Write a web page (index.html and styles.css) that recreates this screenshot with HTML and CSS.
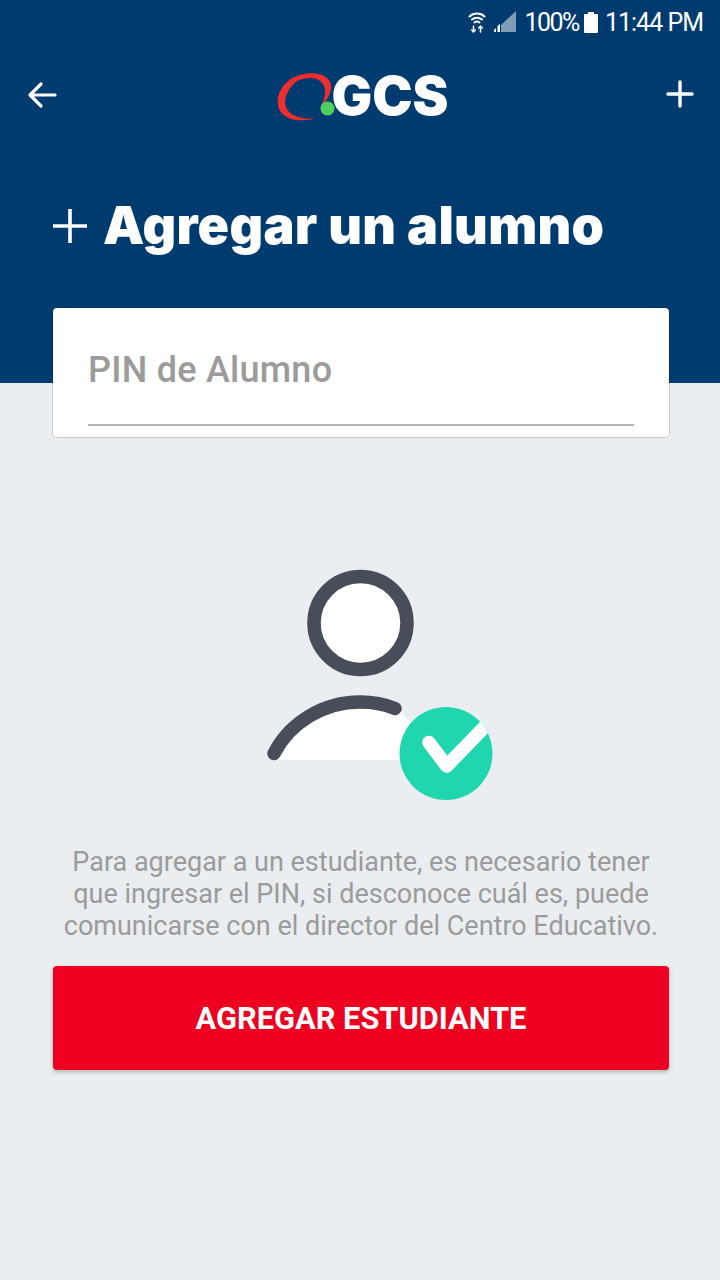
FILE: index.html
```html
<!DOCTYPE html>
<html lang="es">
<head>
<meta charset="utf-8">
<title>Agregar un alumno</title>
<link rel="stylesheet" href="styles.css">
</head>
<body>
<div class="app">
  <header class="hero">
    <div class="status">
      <svg class="ic-wifi" width="18" height="22" viewBox="0 0 18 22" fill="none" stroke="#fff" stroke-linecap="round">
        <path d="M1.500 5.500C5.500 1.500 12.500 1.500 16.500 5.500" stroke-width="2"/>
        <path d="M4 8.500C6.800 6 11.200 6 14 8.500" stroke-width="2"/>
        <path d="M6.500 11.500C8 10.300 10 10.300 11.500 11.500" stroke-width="2"/>
        <path d="M5.500 15v6M3.700 19l1.800 2 1.800-2M12.500 21v-6M10.700 17l1.800-2 1.800 2" stroke-width="1.500"/>
      </svg>
      <svg class="ic-signal" width="22" height="22" viewBox="0 0 22 22">
        <path d="M7 21V14L22 0v21z" fill="#fff" opacity=".5"/>
        <path d="M0 21v-2l2-2v4zM3.500 21v-6l2.500-2v8z" fill="#fff"/>
      </svg>
      <span class="st-pct">100%</span>
      <svg class="ic-batt" width="14" height="21" viewBox="0 0 14 21"><path d="M4 0h6v2h3a1 1 0 0 1 1 1v17a1 1 0 0 1-1 1H1a1 1 0 0 1-1-1V3a1 1 0 0 1 1-1h3z" fill="#fff"/></svg>
      <span class="st-time">11:44 PM</span>
    </div>
    <nav class="nav">
      <svg class="ic-nav ic-back" width="32" height="32" viewBox="0 0 32 32" fill="none" stroke="#fff" stroke-width="3.200" stroke-linecap="round" stroke-linejoin="round"><path d="M29 16H4M15 5 4 16l11 11"/></svg>
      <div class="logo">
        <svg class="logo-mark" width="64" height="54" viewBox="-1 -2 64 54">
          <path d="M40 47C28 51 9 51 3 38-2 25 8 8 24 4 36 0 53 2 55 14 56 22 50 31 44 37 49 28 51 20 47 13 43 6 31 5 21 10 12 17 7 28 10 36 14 46 28 49 40 47z" fill="#ee2e2e"/>
          <circle cx="51.500" cy="37.500" r="7" fill="#4fcf5f"/>
        </svg>
        <span class="logo-text">GCS</span>
      </div>
      <svg class="ic-nav" width="28" height="28" viewBox="0 0 28 28" fill="none" stroke="#fff" stroke-width="3.400" stroke-linecap="round"><path d="M14 2v24M2 14h24"/></svg>
    </nav>
    <h1 class="title">
      <svg class="title-plus" width="36" height="36" viewBox="0 0 36 36" fill="none" stroke="#fff" stroke-width="3.600"><path d="M18 1v34M1 18h34"/></svg>
      <span>Agregar un alumno</span>
    </h1>
  </header>
  <main class="content">
    <section class="card">
      <div class="field">PIN de Alumno</div>
    </section>
    <svg class="illus" width="240" height="250" viewBox="241 560 240 250" overflow="visible">
      <defs><clipPath id="badge"><circle cx="446" cy="753.500" r="46.500"/></clipPath></defs>
      <circle cx="360.500" cy="623" r="46.500" fill="#fff" stroke="#474d59" stroke-width="13.500"/>
      <path d="M274 760C284 726 322 702 360 702 372 702 385 705 400 710L440 760z" fill="#fff"/>
      <path d="M274 753.500C290 722 324 702 360 702 372 702 384 704 395 708.500" fill="none" stroke="#474d59" stroke-width="13.500" stroke-linecap="round"/>
      <circle cx="446" cy="753.500" r="46.500" fill="#20d6ae"/>
      <path d="M429 742.500 446.700 766 500 711" fill="none" stroke="#fff" stroke-width="13.500" stroke-linecap="round" stroke-linejoin="round" clip-path="url(#badge)"/>
    </svg>
    <p class="hint">Para agregar a un estudiante, es necesario tener que ingresar el PIN, si desconoce cuál es, puede comunicarse con el director del Centro Educativo.</p>
    <button class="cta" type="button">AGREGAR ESTUDIANTE</button>
  </main>
</div>
</body>
</html>
```
FILE: styles.css
```css
* { box-sizing: border-box; }
html, body { margin: 0; padding: 0; }
body { font-family: Roboto, "Liberation Sans", sans-serif; background: #eaeef1; }
.app { width: 720px; height: 1280px; overflow: hidden; display: flex; flex-direction: column; }
.hero { background: #003b6f; height: 383px; color: #fff; flex: none; }
.status { height: 44px; padding: 0 17px 0 0; display: flex; justify-content: flex-end; align-items: center; font-size: 25px; letter-spacing: -1px; color: #fff; }
.ic-wifi { margin-right: 8px; }
.ic-signal { margin-right: 8px; }
.st-pct { margin-right: 5px; letter-spacing: -1.500px; }
.ic-batt { margin-right: 7px; }
.nav { display: flex; justify-content: space-between; align-items: center; height: 100px; padding: 0 26px; }
.ic-back { margin-top: 2px; }
.logo { display: flex; align-items: center; margin-top: 4px; }
.logo-mark { margin-right: -8px; margin-top: 0; }
.logo-text { font-family: Inter, sans-serif; font-weight: 900; font-size: 54px; line-height: 54px; letter-spacing: 0; }
.title { margin: 47px 0 0 52px; display: flex; align-items: center; gap: 15px; font-family: Inter, sans-serif; font-weight: 900; font-size: 52px; line-height: 70px; letter-spacing: .3px; }
.content { flex: 1; display: flex; flex-direction: column; align-items: center; padding: 0 51px 0 53px; }
.card { width: 616px; height: 129px; margin-top: -75px; padding: 37px 35px 0; background: #fff; border-radius: 4px; box-shadow: 0 0 0 1px rgba(0,0,0,.14); flex: none; }
.field { height: 81px; border-bottom: 2px solid #b3b3b3; color: #9b9b9b; font-size: 36px; font-weight: 500; line-height: 50px; letter-spacing: .25px; }
.illus { margin-top: 123px; flex: none; }
.hint { width: 616px; margin: 36px 0 0; color: #9b9b9b; font-size: 27px; line-height: 32px; text-align: center; }
.cta { width: 616px; height: 104px; margin-top: 24px; border: 0; border-radius: 4px; background: #ee0020; color: #fff; font-family: Roboto, sans-serif; font-size: 30.800px; font-weight: 700; box-shadow: 0 2px 4px rgba(0,0,0,.25); flex: none; }
```
